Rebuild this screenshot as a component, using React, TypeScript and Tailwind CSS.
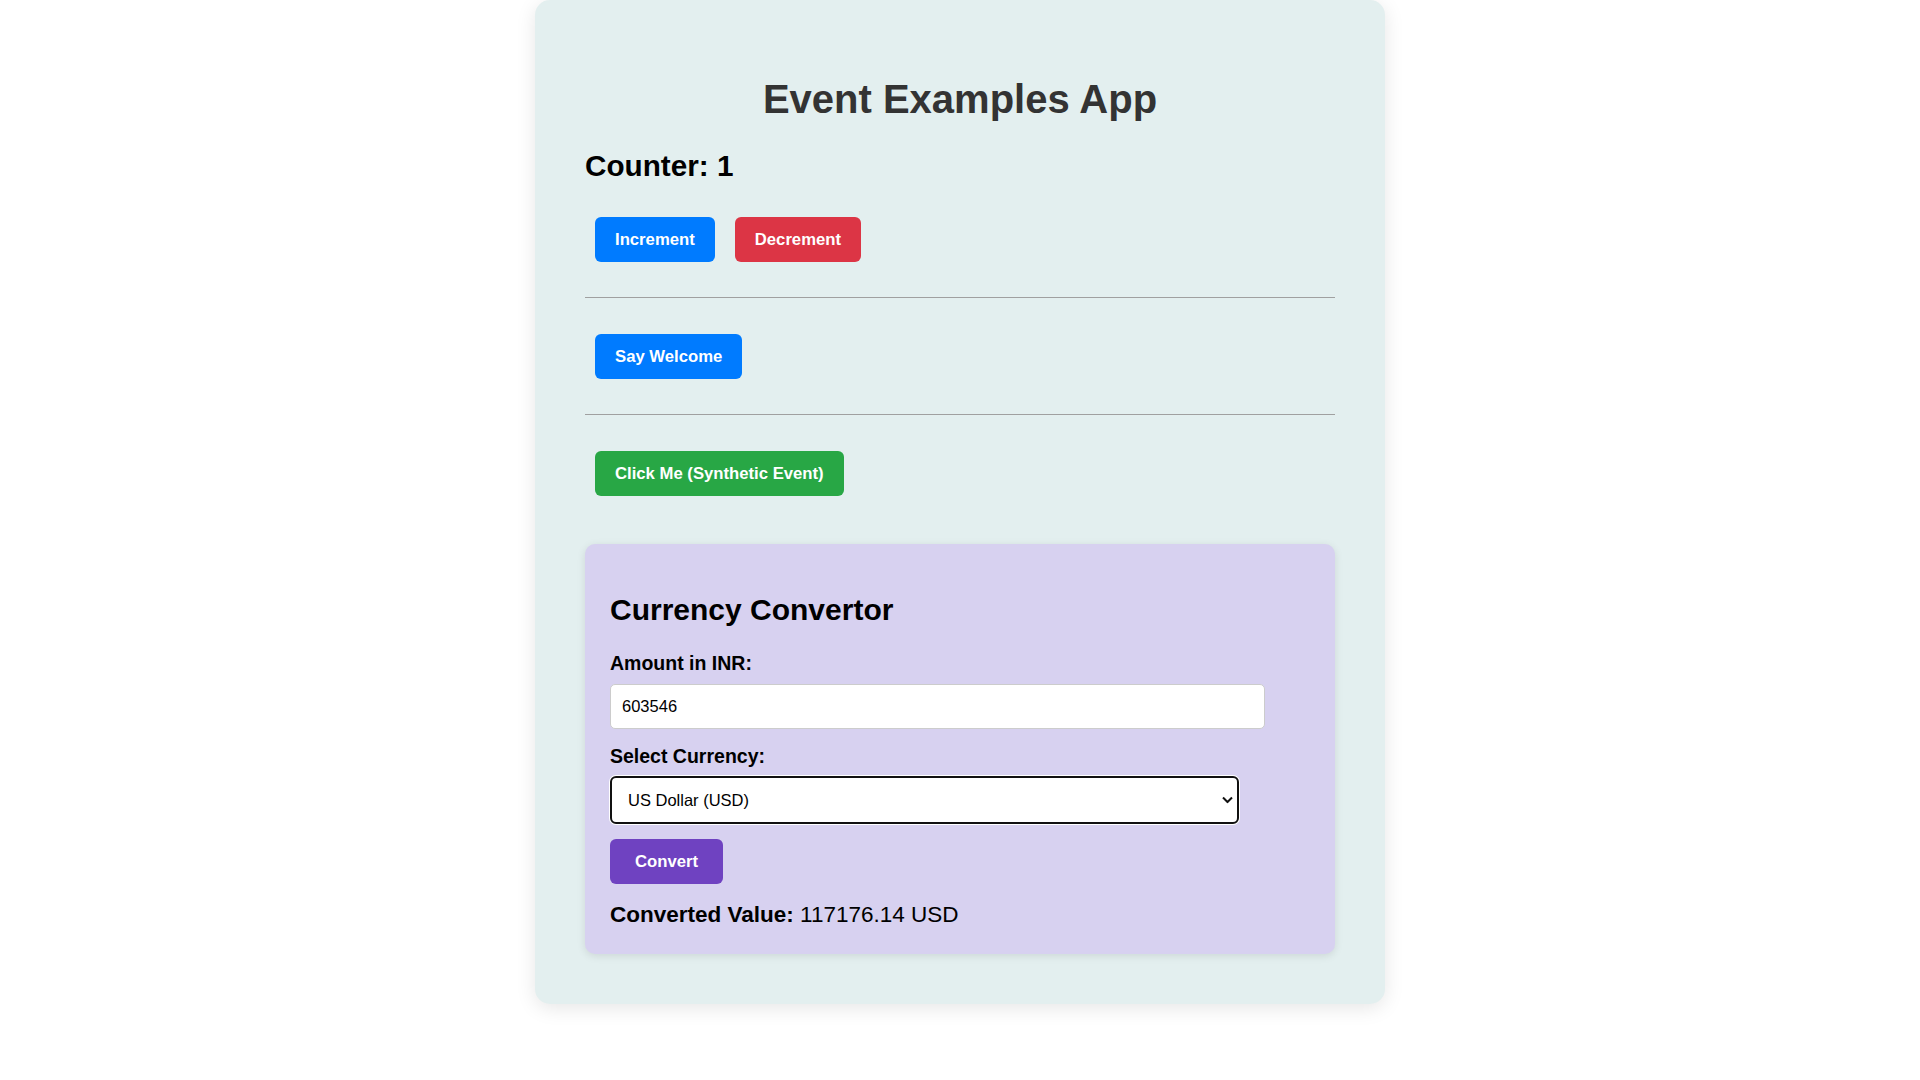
import React from 'react';

const btn = 'h-[45px] px-[20px] rounded-[6px] text-[16.7px] leading-[20px] font-bold text-white';

function CurrencyConvertor() {
  return (
    <div className="mt-[48px] bg-[#d7d1f0] rounded-[10px] shadow-[0_2px_8px_rgba(0,0,0,0.1)] px-[25px] pt-[49px] pb-[27px]">
      <h2 className="text-[30px] leading-[34px] font-bold text-black">Currency Convertor</h2>

      <label className="block mt-[25px] text-[19.5px] leading-[22px] font-bold text-black">Amount in INR:</label>
      <input
        type="text"
        defaultValue="603546"
        className="block mt-[10px] w-[655px] h-[45px] px-[11px] bg-white border border-[#cccccc] rounded-[5px] text-[16.5px] text-black outline-none"
      />

      <label className="block mt-[16px] text-[19.5px] leading-[22px] font-bold text-black">Select Currency:</label>
      {/* focused select, chrome draws a dark ring */}
      <div className="relative mt-[9px] w-[629px]">
        <select
          defaultValue="USD"
          className="block w-full h-[48px] pl-[16px] pr-[30px] appearance-none bg-white border-2 border-[#111111] rounded-[6px] ring-1 ring-white text-[16.5px] text-black outline-none"
        >
          <option value="USD">US Dollar (USD)</option>
          <option value="EUR">Euro (EUR)</option>
          <option value="GBP">British Pound (GBP)</option>
        </select>
        <svg className="absolute right-[6px] top-1/2 -translate-y-1/2 pointer-events-none" width="11" height="7" viewBox="0 0 11 7">
          <polyline points="1,1 5.5,5.5 10,1" fill="none" stroke="#111" strokeWidth="2" />
        </svg>
      </div>

      <button className="block mt-[15px] h-[45px] px-[25px] rounded-[6px] bg-[#6f42c1] text-[16.7px] font-bold text-white">
        Convert
      </button>

      <p className="mt-[18px] text-[22.5px] leading-[25px] text-black">
        <span className="font-bold">Converted Value:</span> 117176.14 USD
      </p>
    </div>
  );
}

export default function App() {
  return (
    <main className="min-h-screen bg-white flex justify-center font-['Liberation_Sans',Arial,sans-serif]">
      <div className="w-[850px] h-fit bg-[#e3efef] rounded-[15px] shadow-[0_4px_20px_rgba(0,0,0,0.1)] px-[50px] pt-[76px] pb-[50px]">
        <h1 className="text-center text-[40px] leading-[46px] font-bold text-[#333333]">Event Examples App</h1>

        {/* Counter */}
        <h2 className="mt-[27px] text-[29.7px] leading-[33px] font-bold text-black">Counter: 1</h2>
        <div className="mt-[35px] pl-[10px] flex gap-[20px]">
          <button className={`${btn} bg-[#007bff]`}>Increment</button>
          <button className={`${btn} bg-[#dc3545]`}>Decrement</button>
        </div>

        <hr className="mt-[35px] border-[#a0a0a0]" />

        <div className="mt-[36px] pl-[10px] flex">
          <button className={`${btn} bg-[#007bff]`}>Say Welcome</button>
        </div>

        <hr className="mt-[35px] border-[#a0a0a0]" />

        <div className="mt-[36px] pl-[10px] flex">
          <button className={`${btn} bg-[#28a745]`}>Click Me (Synthetic Event)</button>
        </div>

        <CurrencyConvertor />
      </div>
    </main>
  );
}
